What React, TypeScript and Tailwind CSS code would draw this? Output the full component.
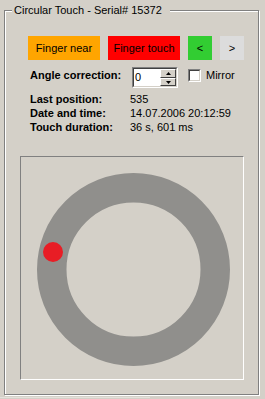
import React from 'react';

const SpinArrow: React.FC<{ up?: boolean }> = ({ up }) => (
  <svg width="5" height="3" viewBox="0 0 5 3">
    <polygon points={up ? '2.5,0 5,3 0,3' : '0,0 5,0 2.5,3'} fill="#000" />
  </svg>
);

const SpinButton: React.FC<{ up?: boolean; h: string }> = ({ up, h }) => (
  <div
    className={`${h} flex items-center justify-center bg-[#d4d0c8] border-t border-l border-t-white border-l-white border-b border-r border-b-[#404040] border-r-[#404040]`}
  >
    <SpinArrow up={up} />
  </div>
);

const App: React.FC = () => {
  return (
    <div className="w-[265px] h-[399px] bg-[#d4d0c8] pt-[10px] pl-[4px] text-[11px] text-black font-['Liberation_Sans',Arial,sans-serif] overflow-hidden">
      {/* group box */}
      <div className="relative w-[255px] h-[385px] border border-[#808080] shadow-[inset_1px_1px_0_#fff,1px_1px_0_#fff]">
        <div className="absolute left-[7px] top-[-7px] w-[158px] pl-[2px] leading-[13px] bg-[#d4d0c8]">
          Circular Touch - Serial# 15372
        </div>

        <div className="mt-[25px] ml-[23px] flex gap-2">
          <div className="w-[72px] h-[24px] flex items-center justify-center bg-[#ffa500]">Finger near</div>
          <div className="w-[72px] h-[24px] flex items-center justify-center bg-[#ff0000]">Finger touch</div>
          <div className="w-[24px] h-[24px] flex items-center justify-center bg-[#32cd32]">&lt;</div>
          <div className="w-[24px] h-[24px] flex items-center justify-center bg-[#dcdcdc]">&gt;</div>
        </div>

        <div className="mt-[7px] ml-[25px] flex items-start leading-[14px]">
          <div className="w-[102px] mt-[1px] font-bold">Angle correction:</div>
          <div className="w-[46px] h-[21px] flex border border-t-[#808080] border-l-[#808080] border-r-white border-b-white">
            <div className="flex-1 flex border border-t-[#404040] border-l-[#404040] border-r-[#d4d0c8] border-b-[#d4d0c8] bg-white">
              <div className="flex-1 pl-[1px] pt-[1px]">0</div>
              <div className="w-[16px] flex flex-col">
                <SpinButton up h="h-[9px]" />
                <SpinButton h="h-[8px]" />
              </div>
            </div>
          </div>
          <div className="ml-[10px] mt-[2px] w-[13px] h-[13px] border border-t-[#808080] border-l-[#808080] border-r-white border-b-white">
            <div className="w-full h-full bg-white border border-t-[#404040] border-l-[#404040] border-r-[#d4d0c8] border-b-[#d4d0c8]" />
          </div>
          <div className="ml-[5px] mt-[1px]">Mirror</div>
        </div>

        <div className="mt-[4px] ml-[25px] grid grid-cols-[100px_auto] leading-[14px]">
          <div className="font-bold">Last position:</div>
          <div>535</div>
          <div className="font-bold">Date and time:</div>
          <div>14.07.2006 20:12:59</div>
          <div className="font-bold">Touch duration:</div>
          <div>36 s, 601 ms</div>
        </div>

        <div className="mt-[22px] ml-[15px] w-[224px] h-[224px] border border-t-[#808080] border-l-[#808080] border-r-white border-b-white">
          <svg width="222" height="222" viewBox="0 0 222 222">
            <circle cx="112.5" cy="112.5" r="81.75" fill="none" stroke="#908f8c" strokeWidth="29.5" />
            <circle cx="32" cy="95" r="10" fill="#e81d25" />
          </svg>
        </div>
      </div>
      <div className="mt-[2px] -ml-[4px] w-[150px] h-[1px] bg-[#e4e1db]" />
    </div>
  );
};

export default App;
